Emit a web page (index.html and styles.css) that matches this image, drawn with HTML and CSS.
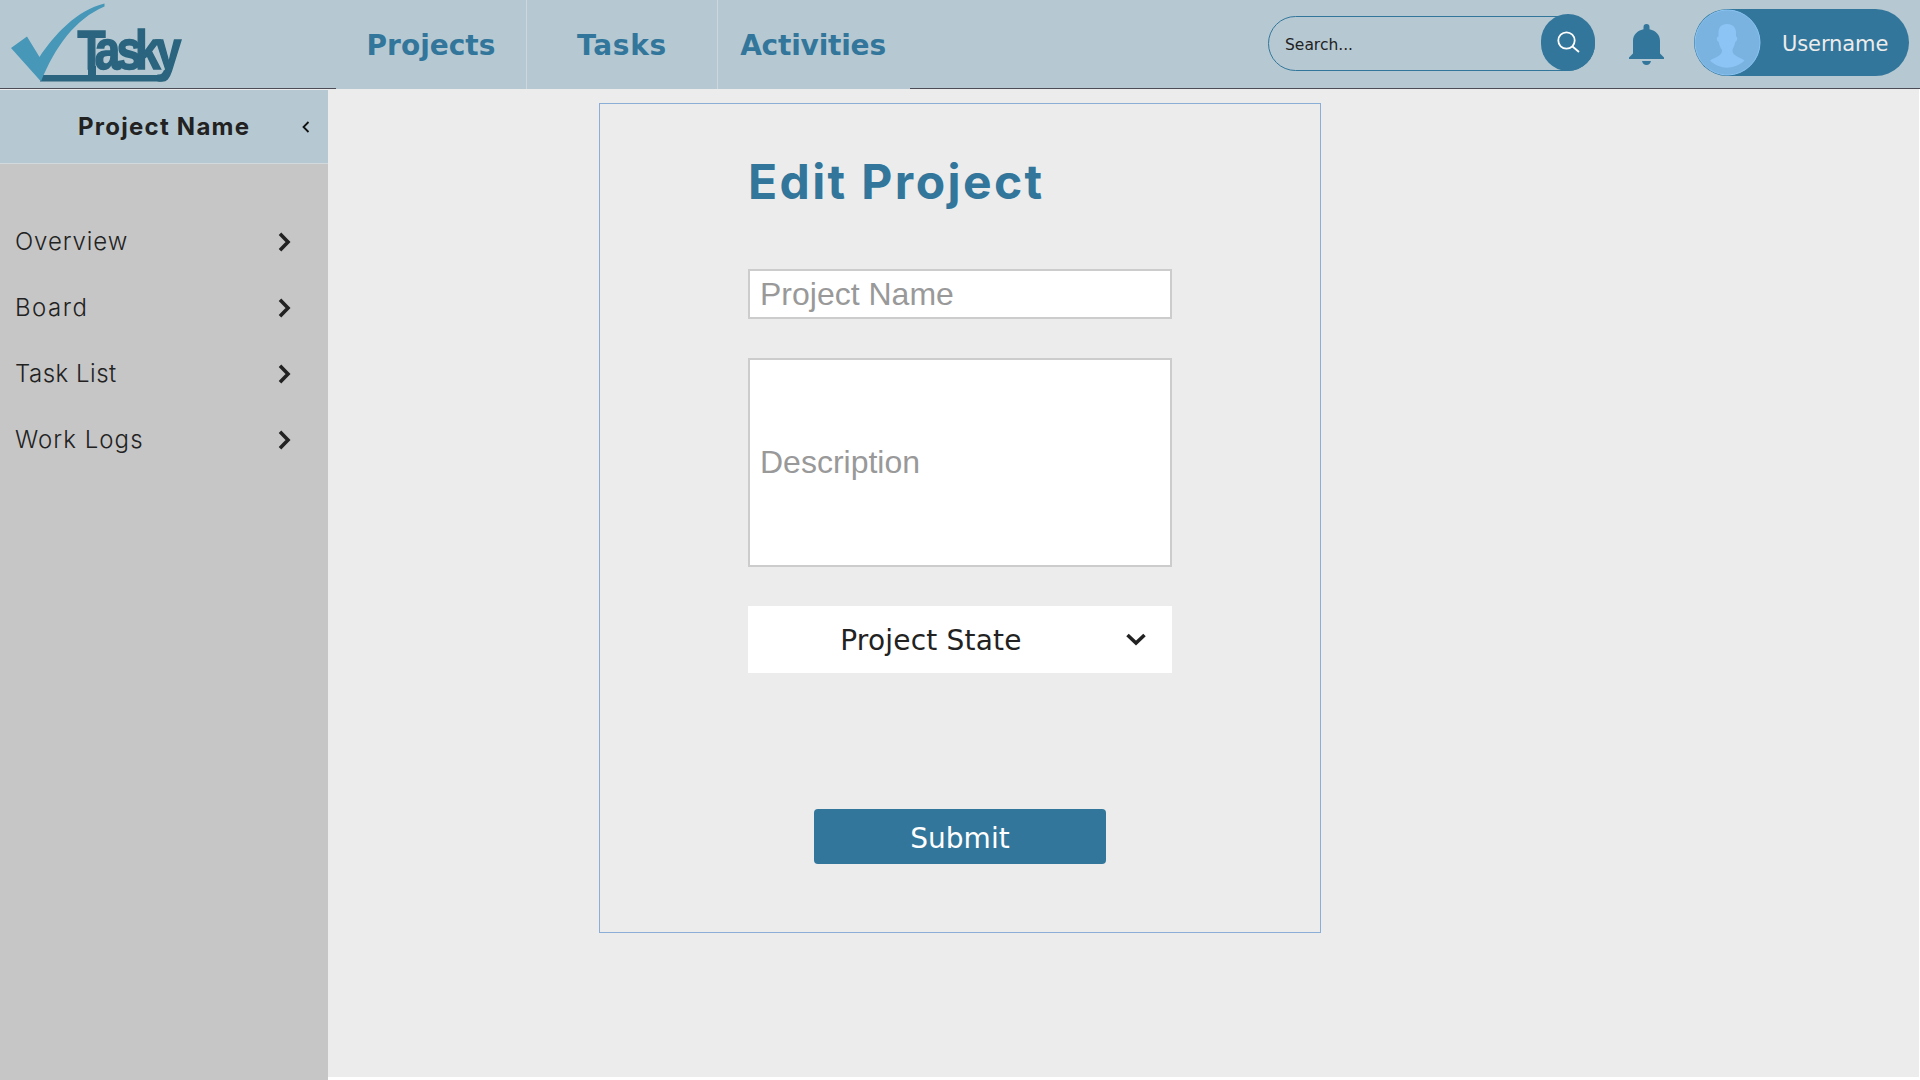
FILE: index.html
```
<!DOCTYPE html>
<html lang="en">
<head>
<meta charset="utf-8">
<title>Tasky - Edit Project</title>
<link rel="stylesheet" href="styles.css">
</head>
<body>
<div class="page">
  <header class="topbar">
    <a class="logo" aria-label="Tasky">
      <svg width="200" height="88" viewBox="0 0 200 88">
        <path class="logo-line" d="M41 75H158Q162 75 164 70L170 72Q168 81 160 81.500H40Z"/>
        <rect class="logo-line" x="88" y="66" width="8" height="12"/>
        <text class="logo-text" transform="scale(.82 1)" x="94.500 115.500 142 164.500 190" y="69">Tasky</text>
        <path class="logo-check" d="M11 48L27 36.500L39.500 57C54 35 77 10 104.500 3.500V6.500C75 19 55 47 41 81.500Z"/>
      </svg>
    </a>
    <nav class="nav">
      <a class="nav-item">Projects</a>
      <a class="nav-item nav-tasks">Tasks</a>
      <a class="nav-item nav-activities">Activities</a>
    </nav>
    <div class="tools">
      <div class="search">
        <span class="search-text">Search...</span>
        <span class="search-button">
          <svg width="24" height="24" viewBox="0 0 24 24"><circle cx="10.500" cy="10.500" r="8.200"/><path d="M16.200 16.200L23 22"/></svg>
        </span>
      </div>
      <svg class="bell" width="35" height="41" viewBox="0 0 35 41"><path d="M14.500 5.200V3a3 3 0 0 1 6 0V5.200C27 6.500 31 11 31 17V29.500L35 33.500V35H0V33.500L4 29.500V17C4 11 8 6.500 14.500 5.200ZM13 37H22Q21 41 17.500 41T13 37Z"/></svg>
      <div class="user">
        <svg class="avatar" width="67" height="67" viewBox="0 0 67 67">
          <circle class="avatar-bg" cx="33.500" cy="33.500" r="32.500"/>
          <path class="avatar-person" d="M33 15C39 15 42 18.500 42 24V27.500C44 27.500 43.500 32 41.300 33C40.500 37 39 39 38.500 41C38 47 46 48 50.500 51.500C41 61 25 61 16 51.500C21 48 28.500 47 28 41C26.500 39 25.500 37 24.700 33C22.500 32 22 27.500 24.500 27.500V24C24.500 18.500 27 15 33 15Z"/>
        </svg>
        <span class="username">Username</span>
      </div>
    </div>
  </header>
  <div class="body">
    <aside class="sidebar">
      <div class="side-head">
        <h2 class="side-title">Project Name</h2>
        <svg class="collapse" width="8" height="12" viewBox="0 0 8 12"><path d="M6.500 1L1.500 6L6.500 11"/></svg>
      </div>
      <ul class="menu">
        <li class="menu-item"><span class="overview">Overview</span><svg width="13" height="20" viewBox="0 0 13 20"><path d="M2 1.800L10 10L2 18.200"/></svg></li>
        <li class="menu-item"><span class="board">Board</span><svg width="13" height="20" viewBox="0 0 13 20"><path d="M2 1.800L10 10L2 18.200"/></svg></li>
        <li class="menu-item"><span class="task-list">Task List</span><svg width="13" height="20" viewBox="0 0 13 20"><path d="M2 1.800L10 10L2 18.200"/></svg></li>
        <li class="menu-item"><span class="work-logs">Work Logs</span><svg width="13" height="20" viewBox="0 0 13 20"><path d="M2 1.800L10 10L2 18.200"/></svg></li>
      </ul>
    </aside>
    <main class="content">
      <form class="card">
        <h1 class="title">Edit Project</h1>
        <input class="field" type="text" placeholder="Project Name">
        <input class="field field-tall" type="text" placeholder="Description">
        <div class="select">
          <span class="select-label">Project State</span>
          <svg width="20" height="13" viewBox="0 0 20 13"><path d="M1.500 2L10 10L18.500 2"/></svg>
        </div>
        <button class="submit" type="button">Submit</button>
      </form>
    </main>
  </div>
</div>
</body>
</html>
```
FILE: styles.css
```
* { box-sizing: border-box; }
body { margin: 0; background: #fff; color: #222; font-family: "DejaVu Sans", sans-serif; }
.page { height: 1080px; display: flex; flex-direction: column; overflow: hidden; }

.topbar { height: 89px; flex: none; display: flex; background: #b6c9d2; border-bottom: 1px solid #4b4c55; }
.logo { width: 336px; flex: none; }
.logo svg { display: block; }
.logo-line { fill: #2b647f; }
.logo-text { fill: #2b647f; stroke: #2b647f; stroke-width: 1.6; font: bold 56px "Liberation Sans", sans-serif; }
.logo-check { fill: #4797b8; }
.nav { display: grid; grid-template-columns: 191px 191px 192px; height: 89px; background: #b6c9d2; }
.nav-item { display: flex; align-items: center; justify-content: center; padding-top: 2px; border-right: 1px solid #d0d7dc; color: #32769b; font-size: 28px; font-weight: bold; }
.nav-item:last-child { border-right: 0; }
.nav-tasks { letter-spacing: 0.7px; }
.nav-activities { letter-spacing: -0.2px; padding-right: 2px; }

.tools { margin-left: auto; display: flex; align-items: flex-start; padding-right: 11px; }
.search { width: 327px; height: 55px; margin-top: 16px; display: flex; align-items: center; justify-content: space-between; border: 1px solid #32769b; border-radius: 28px; padding-left: 16px; }
.search-text { font-size: 15.5px; padding-top: 2px; }
.search-button { width: 54px; height: 57px; margin: -3px -1px 0 0; border-radius: 27px; background: #32769b; display: flex; align-items: center; justify-content: center; }
.search-button svg { fill: none; stroke: #fff; stroke-width: 1.8; }
.bell { margin: 24px 30px 0 34px; fill: #32769b; }
.user { width: 215px; height: 67px; margin-top: 9px; display: flex; align-items: center; border-radius: 34px; background: #32769b; }
.avatar { flex: none; }
.avatar-bg { fill: #7ab2e0; stroke: #8cc5f5; stroke-width: 1; }
.avatar-person { fill: #8cc5f5; }
.username { margin-left: 21px; padding-top: 2px; color: #ececec; font-size: 21px; letter-spacing: -0.1px; }

.body { flex: 1; display: flex; }
.sidebar { width: 328px; flex: none; background: #c6c6c6; border-top: 1px solid #ececec; font-family: Inter, sans-serif; }
.side-head { height: 74px; display: flex; align-items: center; background: #b6c9d2; border-bottom: 1px solid #d3dade; }
.side-title { width: 302px; margin: 0; padding-left: 78px; font-size: 24px; line-height: 30px; font-weight: 700; white-space: nowrap; letter-spacing: 1.25px; }
.collapse { fill: none; stroke: #111; stroke-width: 1.8; }
.menu { list-style: none; margin: 0; padding: 44px 37px 0 15px; }
.menu-item { height: 66px; display: flex; align-items: center; justify-content: space-between; padding-top: 1px; font-size: 24px; font-weight: 300; }
.menu-item svg { fill: none; stroke: #222; stroke-width: 3.6; }
.overview { letter-spacing: 0.9px; }
.board { letter-spacing: 1.5px; }
.task-list { letter-spacing: 0.5px; }
.work-logs { letter-spacing: 1.05px; }

.content { flex: 1; background: #ececec; margin: 0 1px 3px 0; }
.card { width: 722px; height: 830px; margin: 14px 0 0 271px; padding: 48px 148px 0; border: 1px solid #8aaed6; display: flex; flex-direction: column; }
.title { margin: 0 0 57px; height: 60px; font: 700 48px/60px Inter, sans-serif; color: #32769b; white-space: nowrap; letter-spacing: 2.4px; }
.field { width: 424px; height: 50px; flex: none; margin: 0 0 39px; padding: 0 10px; border: 2px solid #ccc; background: #fff; font: 32px "Liberation Sans", sans-serif; border-radius: 0; }
.field::placeholder { color: #999; opacity: 1; }
.field-tall { height: 209px; }
.select { height: 67px; flex: none; display: flex; align-items: center; background: #fff; }
.select-label { width: 366px; padding-top: 2px; text-align: center; font-size: 28px; letter-spacing: 0.2px; }
.select svg { margin-left: 12px; fill: none; stroke: #222; stroke-width: 3.6; }
.submit { width: 292px; height: 55px; margin: 136px auto 0; padding: 4px 0 0; border: 0; border-radius: 4px; background: #32769b; color: #fff; font: 28px "DejaVu Sans", sans-serif; }
```
